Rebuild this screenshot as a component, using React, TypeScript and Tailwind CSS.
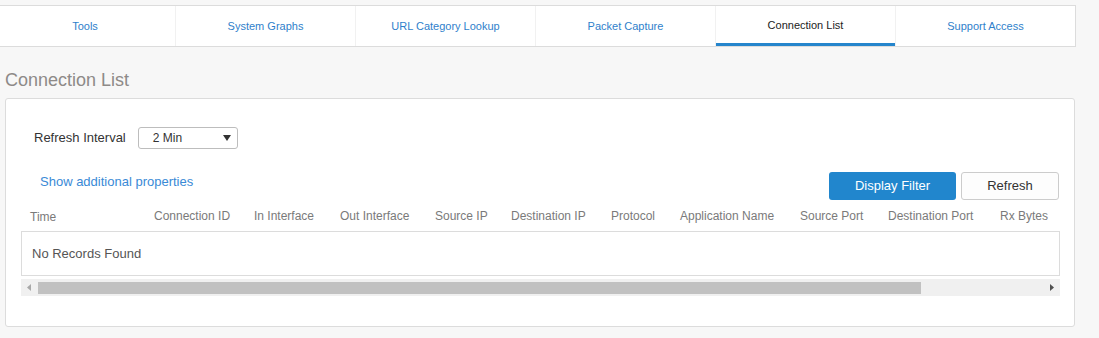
const tabs = [
  "Tools",
  "System Graphs",
  "URL Category Lookup",
  "Packet Capture",
  "Connection List",
  "Support Access",
];

// column header widths taken from where each label starts
const columns: { label: string; width: string }[] = [
  { label: "Time", width: "w-[124px]" },
  { label: "Connection ID", width: "w-[100px]" },
  { label: "In Interface", width: "w-[86px]" },
  { label: "Out Interface", width: "w-[95px]" },
  { label: "Source IP", width: "w-[76px]" },
  { label: "Destination IP", width: "w-[100px]" },
  { label: "Protocol", width: "w-[69px]" },
  { label: "Application Name", width: "w-[120px]" },
  { label: "Source Port", width: "w-[88px]" },
  { label: "Destination Port", width: "w-[112px]" },
  { label: "Rx Bytes", width: "w-[59px]" },
];

export default function App() {
  const active = "Connection List";

  return (
    <div
      className="w-[1099px] h-[338px] overflow-hidden bg-[#f7f7f7] pt-[5px]"
      style={{ fontFamily: '"Liberation Sans", Arial, sans-serif' }}
    >
      {/* Tab strip */}
      <div className="flex ml-[-6px] w-[1082px] border border-[#dcdcdc] bg-white">
        {tabs.map((tab, i) => {
          const isActive = tab === active;
          return (
            <div
              key={tab}
              className={`relative w-[180px] h-[40px] flex items-center justify-center text-[11px] ${
                i > 0 ? "border-l border-[#f1f1f1]" : ""
              } ${isActive ? "text-[#222]" : "text-[#2f7fcb]"}`}
            >
              <span className={isActive ? "-mt-[2px]" : ""}>{tab}</span>
              {isActive && (
                <span className="absolute left-0 right-0 bottom-0 h-[3px] bg-[#2585cc]" />
              )}
            </div>
          );
        })}
      </div>

      {/* Page title */}
      <h1 className="ml-[5px] mt-[21px] text-[18px] leading-[24px] text-[#8e8a88]">
        Connection List
      </h1>

      {/* Card */}
      <div className="ml-[5px] mt-[6px] w-[1070px] h-[229px] border border-[#dcdcdc] rounded-[3px] bg-white pl-[15px] pr-[14px]">
        {/* Refresh interval */}
        <div className="flex items-center mt-[28px] ml-[13px] h-[22px]">
          <span className="text-[13px] text-[#333]">Refresh Interval</span>
          <div className="ml-[12px] w-[100px] h-[22px] border border-[#bdbdbd] rounded-[3px] flex items-center justify-between pl-[14px] pr-[6px] text-[12px] text-[#333]">
            <span>2 Min</span>
            <svg width="8" height="6" viewBox="0 0 8 6">
              <path d="M0 0h8L4 6z" fill="#333" />
            </svg>
          </div>
        </div>

        {/* Link + actions */}
        <div className="flex items-start justify-between mt-[23px] h-[28px]">
          <span className="ml-[19px] mt-[1px] text-[13px] leading-[18px] text-[#3a8ad6]">
            Show additional properties
          </span>
          <div className="flex gap-[5px] mr-[1px]">
            <button className="w-[127px] h-[28px] rounded-[3px] bg-[#2186cd] text-white text-[13px]">
              Display Filter
            </button>
            <button className="w-[98px] h-[28px] rounded-[3px] border border-[#cccccc] bg-[#fdfdfd] text-[#333] text-[13px]">
              Refresh
            </button>
          </div>
        </div>

        {/* Column headers */}
        <div className="flex items-center h-[31px] pl-[9px] text-[12px] text-[#7a7a7a] whitespace-nowrap">
          {columns.map((c, i) => (
            <span key={c.label} className={`${c.width} ${i === 0 ? "mt-[2px]" : ""}`}>
              {c.label}
            </span>
          ))}
        </div>

        {/* Empty body */}
        <div className="h-[45px] border border-[#dcdcdc] flex items-center pl-[10px] text-[13px] text-[#555]">
          No Records Found
        </div>

        {/* Horizontal scrollbar */}
        <div className="mt-[3px] h-[17px] bg-[#f0f0f0] flex items-center">
          <svg className="ml-[6px]" width="4" height="7" viewBox="0 0 4 7">
            <path d="M4 0v7L0 3.5z" fill="#a8a8a8" />
          </svg>
          <div className="ml-[7px] w-[883px] h-[12px] bg-[#c1c1c1]" />
          <div className="flex-1" />
          <svg className="mr-[6px]" width="4" height="7" viewBox="0 0 4 7">
            <path d="M0 0v7l4-3.5z" fill="#505050" />
          </svg>
        </div>
      </div>
    </div>
  );
}
